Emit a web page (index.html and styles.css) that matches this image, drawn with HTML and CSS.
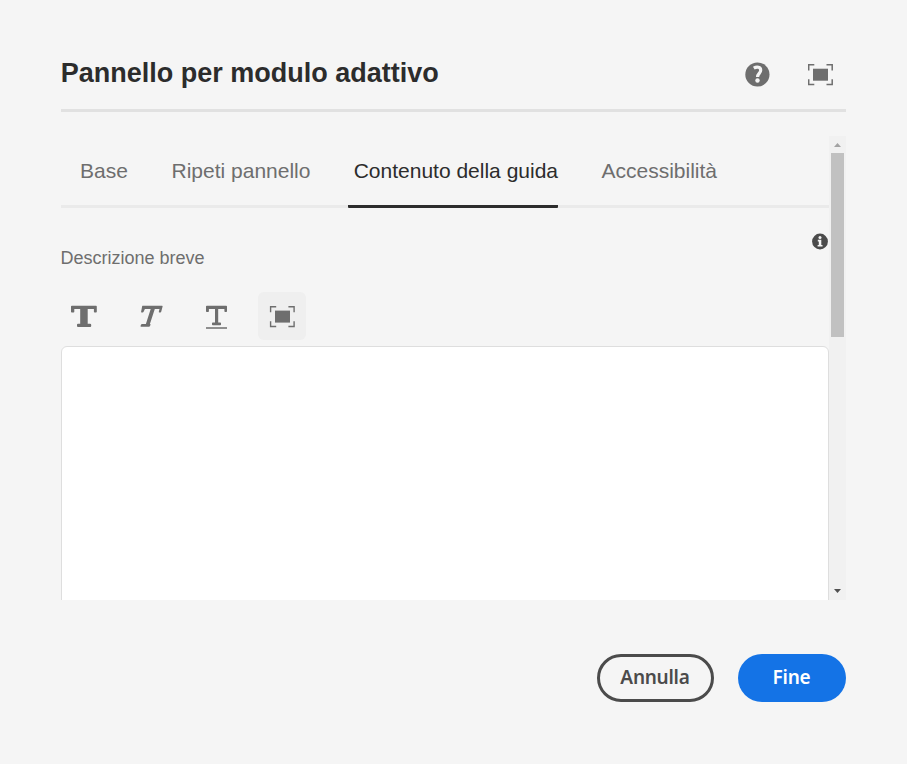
FILE: index.html
```html
<!DOCTYPE html>
<html lang="it">
<head>
<meta charset="utf-8">
<title>Pannello per modulo adattivo</title>
<link rel="stylesheet" href="styles.css">
</head>
<body>
<main class="dialog">
  <header class="header">
    <h1 class="title">Pannello per modulo adattivo</h1>
    <svg class="help" width="26" height="26" viewBox="0 0 26 26"><circle cx="12.400" cy="12.500" r="12.100" fill="#6e6e6e"/><path d="M8.800 6.200C12 4.300 15.700 5.100 15.700 8.200c0 3-3.100 3.300-3.100 6.700" fill="none" stroke="#f5f5f5" stroke-width="3.200"/><circle cx="12.500" cy="18.500" r="2.200" fill="#f5f5f5"/></svg>
    <svg class="expand" width="26" height="22" viewBox="0 0 26 22"><path d="M.7 6.500V.8h5.600M18.500 .8h5.700v5.700M24.200 15.200v5.300h-5.700M6.300 20.500H.7v-5.300" fill="none" stroke="#6e6e6e" stroke-width="1.500"/><path d="M5 4.700h15v12H5z" fill="#6e6e6e"/></svg>
  </header>
  <div class="viewport">
    <section class="content">
      <nav class="tabs">
        <span class="tab base">Base</span>
        <span class="tab repeat">Ripeti pannello</span>
        <span class="tab active">Contenuto della guida</span>
        <span class="tab access">Accessibilità</span>
      </nav>
      <div class="field-head">
        <label class="label">Descrizione breve</label>
        <svg class="info" width="16" height="16" viewBox="0 0 16 16"><circle cx="8" cy="7.500" r="7.900" fill="#4b4b4b"/><circle cx="8" cy="3.500" r="1.500" fill="#f5f5f5"/><path d="M5.800 5.800h3.500v5.200h1.200v1.600H5.600v-1.600h1.200V7.400h-1z" fill="#f5f5f5"/></svg>
      </div>
      <div class="toolbar">
        <span class="tool"><svg width="26" height="24" viewBox="0 0 26 24"><path d="M.8 .700h24.200q.8 0 .8.800V6.700q0 .8-.8.8h-1.300q-.8 0-.8-.8V3.900h-6.200v14.900H19q1.200 0 1.200 1v1.200q0 1-1 1H7q-1 0-1-1v-1.200q0-1 1-1h2.200V3.900H3.300V6.700q0 .8-.8.8H.8Q0 7.500 0 6.700V1.500Q0 .7.8.7z"/></svg></span>
        <span class="tool"><svg width="26" height="24" viewBox="-1 0 26 24"><path d="M4.500 .7H24q.8 0 .6.800L23.200 6.700q-.2.800-.9.800h-.9q-.8 0-.6-.8l.7-2.800h-4.700L11.900 18.900h.2q.6 0 .4.800l-.5 1.300q-.3.800-1 .8H3.100q-.8 0-.6-.8l.5-1.300q.3-.8 1-.8h3.900L12.700 3.900H6.900L5.600 6.700q-.3.800-1 .8h-.9q-.8 0-.6-.8l1-5.200q.1-.8.4-.8z"/></svg></span>
        <span class="tool"><svg width="26" height="24" viewBox="-.5 0 26 24"><path d="M3.300 .700h19.400q.8 0 .8.800v4.700q0 .8-.8.8h-1q-.8 0-.8-.8V3.900h-6.200v13.500h2q.8 0 .8.800v1.200q0 .8-.8.8H9.300q-.8 0-.8-.8v-1.200q0-.8.8-.8h2.200V3.900H5.400v2.300q0 .8-.8.8H3.300q-.8 0-.8-.8V1.500q0-.8.8-.8zM2.500 22.200h21v1.500h-21z"/></svg></span>
        <span class="tool selected"><svg width="26" height="22" viewBox="-.4 0 26 22"><path d="M1.200 6.200V.7h5.600M19 .7h5.700v5.500M24.700 15.200v5.300H19M6.800 20.500H1.200v-5.300" fill="none" stroke="#6e6e6e" stroke-width="1.400"/><path d="M5.600 4.600h15v12h-15z"/></svg></span>
      </div>
      <div class="editor"></div>
    </section>
    <div class="scrollbar">
      <svg class="arrow" width="17" height="17" viewBox="0 0 17 17"><path d="M5 11h7L8.500 7z" fill="#a3a3a3"/></svg>
      <div class="thumb"></div>
      <svg class="arrow down" width="17" height="17" viewBox="0 0 17 17"><path d="M5 6h7l-3.500 4z" fill="#505050"/></svg>
    </div>
  </div>
  <footer class="actions">
    <button class="button cancel">Annulla</button>
    <button class="button done">Fine</button>
  </footer>
</main>
</body>
</html>
```
FILE: styles.css
```css
* { box-sizing: border-box; }
body { margin: 0; background: #f5f5f5; font-family: "Liberation Sans", Arial, sans-serif; overflow: hidden; }
svg { display: block; flex: none; }
.dialog { width: 785px; margin: 0 0 0 61px; }
.header { height: 112px; border-bottom: 3px solid #e1e1e1; display: flex; align-items: flex-start; }
.title { margin: 58px 0 0 -.3px; font-size: 27px; line-height: 31px; font-weight: 700; color: #2c2c2c; white-space: nowrap; flex: 1; }
.help { margin: 62px 37px 0 0; }
.expand { margin: 64px 12px 0 0; }
.viewport { margin-top: 24px; height: 464px; display: flex; overflow: hidden; }
.content { width: 768px; flex: none; }
.tabs { display: flex; height: 72px; border-bottom: 3px solid #eaeaea; padding-left: 19px; }
.tab { height: 72px; flex: none; padding-top: 23px; font-size: 21px; line-height: 24px; color: #6e6e6e; white-space: nowrap; }
.base { width: 91.5px; }
.repeat { width: 176.2px; }
.active { width: 210.8px; padding-left: 6px; color: #2c2c2c; border-bottom: 3px solid #2c2c2c; border-radius: 1px; }
.access { margin-left: 43px; }
.field-head { height: 84px; display: flex; justify-content: space-between; }
.label { padding-top: 40px; margin-left: -.5px; font-size: 18px; line-height: 21px; color: #6e6e6e; }
.info { margin: 26px 1px 0 0; overflow: visible; }
.toolbar { height: 54px; margin-left: -1px; display: flex; gap: 18px; }
.tool { width: 48px; height: 48px; padding-top: 2px; border-radius: 6px; display: flex; align-items: center; justify-content: center; fill: #6e6e6e; }
.selected { background: #efefef; }
.editor { height: 330px; background: #fff; border: 1px solid #dedede; border-radius: 6px; }
.scrollbar { width: 17px; background: #f1f1f1; display: flex; flex-direction: column; }
.thumb { width: 13px; height: 184px; margin-left: 2px; background: #c1c1c1; }
.down { margin-top: auto; }
.actions { margin-top: 54px; display: flex; justify-content: flex-end; gap: 24px; }
.button { height: 48px; border-radius: 24px; padding: 0 1px 2px 0; font-family: "Noto Sans", sans-serif; font-weight: 600; font-size: 19px; letter-spacing: -.25px; }
.cancel { width: 117px; border: 3px solid #4b4b4b; color: #4b4b4b; background: transparent; }
.done { width: 108px; border: 0; color: #fff; background: #1473e6; }
```
